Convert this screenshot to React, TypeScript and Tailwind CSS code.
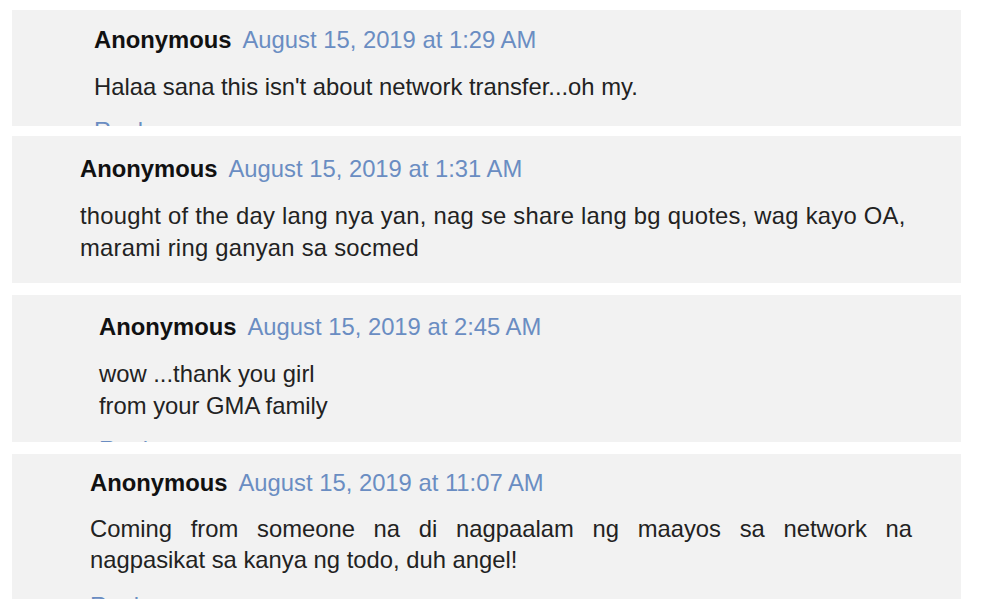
type Comment = {
  date: string
  lines: string[]
  justify?: boolean
}

// each card is a cropped screenshot, so paddings/heights differ slightly
const cards: (Comment & { box: string; pad: string; bodyW: string; lead: string; gap: string; reply: string })[] = [
  {
    date: 'August 15, 2019 at 1:29 AM',
    lines: ["Halaa sana this isn't about network transfer...oh my."],
    box: 'h-[116px]',
    pad: 'pl-[82px] pt-[14px]',
    bodyW: 'w-[840px]',
    lead: 'leading-[32px]',
    gap: 'mt-[15px]',
    reply: 'mt-[12px]',
  },
  {
    date: 'August 15, 2019 at 1:31 AM',
    lines: ['thought of the day lang nya yan, nag se share lang bg quotes, wag kayo OA, marami ring ganyan sa socmed'],
    box: 'h-[147px] mt-[10px]',
    pad: 'pl-[68px] pt-[17px]',
    bodyW: 'w-[850px] tracking-[0.25px]',
    lead: 'leading-[32px]',
    gap: 'mt-[15px]',
    reply: 'mt-[12px]',
  },
  {
    date: 'August 15, 2019 at 2:45 AM',
    lines: ['wow ...thank you girl', 'from your GMA family'],
    box: 'h-[147px] mt-[12px]',
    pad: 'pl-[87px] pt-[16px]',
    bodyW: 'w-[820px]',
    lead: 'leading-[32px]',
    gap: 'mt-[15px]',
    reply: 'mt-[12px]',
  },
  {
    date: 'August 15, 2019 at 11:07 AM',
    lines: ['Coming from someone na di nagpaalam ng maayos sa network na nagpasikat sa kanya ng todo, duh angel!'],
    justify: true,
    box: 'h-[145px] mt-[12px]',
    pad: 'pl-[78px] pt-[13px]',
    bodyW: 'w-[822px]',
    lead: 'leading-[31px]',
    gap: 'mt-[14px]',
    reply: 'mt-[15px]',
  },
]

export default function App() {
  return (
    <div
      className="w-[1000px] h-[611px] bg-white pt-[10px] pl-[12px] flex flex-col overflow-hidden text-[23.8px]"
      style={{ fontFamily: '"Liberation Sans", Arial, sans-serif' }}
    >
      {cards.map((c, i) => (
        <div key={i} className={`w-[949px] ${c.box} ${c.pad} bg-[#f2f2f2] overflow-hidden shrink-0`}>
          <div className="flex items-baseline gap-[11px] leading-[32px]">
            <span className="font-bold text-[#111]">Anonymous</span>
            <span className="text-[#6a8dc2]">{c.date}</span>
          </div>
          <div className={`${c.gap} ${c.bodyW} ${c.lead} text-[#222] ${c.justify ? 'text-justify' : ''}`}>
            {c.lines.map((l, j) => (
              <p key={j}>{l}</p>
            ))}
          </div>
          {/* reply link sits just under the crop line of each screenshot */}
          <div className={`${c.reply} leading-[32px] text-[#6a8dc2]`}>Reply</div>
        </div>
      ))}
    </div>
  )
}
